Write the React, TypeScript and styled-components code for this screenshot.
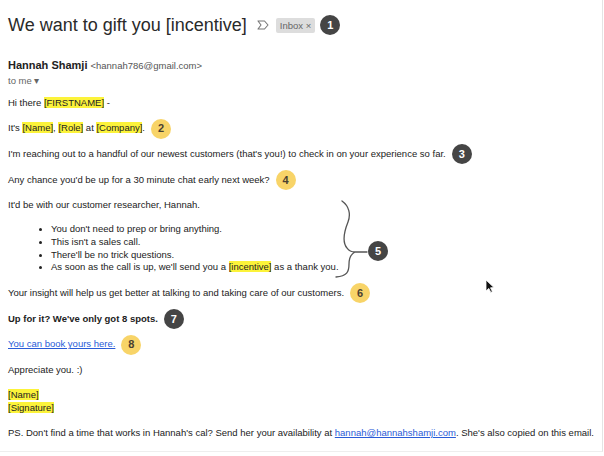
import styled, { createGlobalStyle } from "styled-components";

const GlobalStyle = createGlobalStyle`
  html, body {
    margin: 0;
    padding: 0;
    background: #ffffff;
  }
  body {
    font-family: "Liberation Sans", Arial, sans-serif;
    color: #222222;
  }
`;

const Page = styled.div`
  position: relative;
  width: 603px;
  height: 452px;
  box-sizing: border-box;
  border-right: 1px solid #e4e4e4;
  border-bottom: 1px solid #eeeeee;
  padding: 13px 0 0 8px;
  overflow: hidden;
`;

const TitleRow = styled.div`
  display: flex;
  align-items: center;
  height: 24px;
`;

const Title = styled.h1`
  margin: 0;
  font-family: "Liberation Sans", Arial, sans-serif;
  font-weight: 400;
  font-size: 18px;
  color: #2a2a2a;
`;

const ImportantIcon = styled.svg`
  margin-left: 10px;
  width: 12px;
  height: 10px;
`;

const Chip = styled.span`
  margin-left: 7px;
  background: #dddddd;
  color: #666;
  font-size: 9.5px;
  padding: 2px 4px;
  border-radius: 2px;
  line-height: 11px;
`;

const Badge = styled.span<{ $dark?: boolean }>`
  display: inline-flex;
  align-items: center;
  justify-content: center;
  width: 20px;
  height: 20px;
  border-radius: 50%;
  background: ${(p) => (p.$dark ? "#454545" : "#f8d468")};
  color: ${(p) => (p.$dark ? "#ffffff" : "#4a4030")};
  font-family: "Liberation Sans", Arial, sans-serif;
  font-weight: 700;
  font-size: 11px;
  vertical-align: middle;
  margin: -4px 0 -4px 6px;
`;

const TitleBadge = styled(Badge)`
  margin: 0 0 0 5px;
`;

const Sender = styled.div`
  margin-top: 22px;
  font-size: 11px;
  line-height: 13px;
`;

const SenderName = styled.b`
  color: #222;
`;

const SenderMail = styled.span`
  color: #555;
  font-size: 9.5px;
  margin-left: 3px;
`;

const ToMe = styled.div`
  margin-top: 3px;
  color: #666;
  font-size: 9.5px;
  line-height: 12px;
`;

const Body = styled.div`
  margin-top: 9px;
  font-size: 9.5px;
  line-height: 13px;
  color: #222;
`;

const P = styled.p<{ $bold?: boolean; $gap?: number }>`
  margin: ${(p) => p.$gap ?? 0}px 0 12.2px 0;
  font-weight: ${(p) => (p.$bold ? 700 : 400)};
  white-space: nowrap;
`;

const Mark = styled.span`
  background: #fcf33a;
`;

const Link = styled.a`
  color: #2a5bd7;
  text-decoration: underline;
`;

const ListWrap = styled.div`
  position: relative;
  margin-bottom: 12.2px;
`;

const List = styled.ul`
  margin: 0;
  padding-left: 43px;
  line-height: 12.6px;
  li::marker {
    font-size: 9px;
  }
`;

const Brace = styled.svg`
  position: absolute;
  left: 317px;
  top: -23px;
  width: 50px;
  height: 80px;
  overflow: visible;
`;

const BraceBadge = styled(Badge)`
  position: absolute;
  left: 360px;
  top: 18px;
  margin: 0;
`;

const Signature = styled.div`
  margin-bottom: 12.2px;
`;

const Cursor = styled.svg`
  position: absolute;
  left: 485px;
  top: 279px;
  width: 10px;
  height: 14px;
`;

export default function App() {
  return (
    <Page>
      <GlobalStyle />
      <TitleRow>
        <Title>We want to gift you [incentive]</Title>
        <ImportantIcon viewBox="0 0 12 10">
          <path d="M1 1 H7.5 L11 5 L7.5 9 H1 L4 5 Z" fill="none" stroke="#777" strokeWidth="1.1" strokeLinejoin="round" />
        </ImportantIcon>
        <Chip>Inbox ×</Chip>
        <TitleBadge $dark>1</TitleBadge>
      </TitleRow>

      <Sender>
        <SenderName>Hannah Shamji</SenderName>
        <SenderMail>&lt;hannah786@gmail.com&gt;</SenderMail>
      </Sender>
      <ToMe>to me ▾</ToMe>

      <Body>
        <P>Hi there <Mark>[FIRSTNAME]</Mark> -</P>
        <P>
          It's <Mark>[Name]</Mark>, <Mark>[Role]</Mark> at <Mark>[Company]</Mark>.<Badge>2</Badge>
        </P>
        <P>
          I'm reaching out to a handful of our newest customers (that's you!) to check in on your experience so far.
          <Badge $dark>3</Badge>
        </P>
        <P>
          Any chance you'd be up for a 30 minute chat early next week?<Badge>4</Badge>
        </P>
        <P>It'd be with our customer researcher, Hannah.</P>

        <ListWrap>
          <List>
            <li>You don't need to prep or bring anything.</li>
            <li>This isn't a sales call.</li>
            <li>There'll be no trick questions.</li>
            <li>
              As soon as the call is up, we'll send you a <Mark>[incentive]</Mark> as a thank you.
            </li>
          </List>
          <Brace viewBox="0 0 50 80">
            <path
              d="M17 1 C 24 6, 26 14, 23 22 C 19 32, 17 42, 22 48 C 24 51, 27 52, 30 52 L 42 52 M 30 52 C 26 54, 24 58, 24 64 C 24 72, 22 76, 11 77"
              fill="none"
              stroke="#555"
              strokeWidth="1.3"
              strokeLinecap="round"
            />
          </Brace>
          <BraceBadge $dark>5</BraceBadge>
        </ListWrap>

        <P>
          Your insight will help us get better at talking to and taking care of our customers.<Badge>6</Badge>
        </P>
        <P $bold>
          Up for it? We've only got 8 spots.<Badge $dark>7</Badge>
        </P>
        <P>
          <Link href="#">You can book yours here.</Link>
          <Badge>8</Badge>
        </P>
        <P>Appreciate you. :)</P>
        <Signature>
          <Mark>[Name]</Mark>
          <br />
          <Mark>[Signature]</Mark>
        </Signature>
        <P $gap={4}>
          PS. Don't find a time that works in Hannah's cal? Send her your availability at{" "}
          <Link href="#">hannah@hannahshamji.com</Link>. She's also copied on this email.
        </P>
      </Body>

      <Cursor viewBox="0 0 10 14">
        <path d="M1 1 L1 12 L3.8 9.4 L5.8 13.4 L7.4 12.6 L5.5 8.8 L9 8.6 Z" fill="#111" stroke="#fff" strokeWidth="0.8" />
      </Cursor>
    </Page>
  );
}
